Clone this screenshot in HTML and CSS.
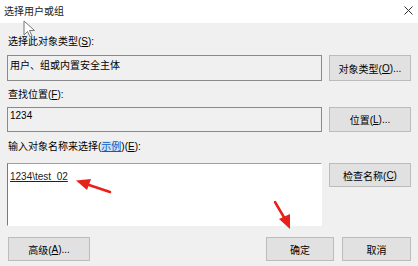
FILE: index.html
```html
<html>
    <head>
        <meta charset="utf-8">
        <title>选择用户或组</title>
        <link rel="stylesheet" href="styles.css">
    </head>
    <body>
        <div class="titlebar">
            <span class="title">选择用户或组</span>
            <svg class="close" width="9" height="9" viewBox="0 0 9 9">
                <path d="M0.5 0.5 L8.5 8.5 M8.5 0.5 L0.5 8.5" stroke="#333" stroke-width="1" fill="none"/>
            </svg>
        </div>
        <div class="content">
            <div class="label">选择此对象类型(<u>S</u>):</div>
            <div class="row">
                <div class="field readonly">用户、组或内置安全主体</div>
                <div class="btn">对象类型(<u>O</u>)...</div>
            </div>

            <div class="label second">查找位置(<u>F</u>):</div>
            <div class="row">
                <div class="field readonly">1234</div>
                <div class="btn">位置(<u>L</u>)...</div>
            </div>

            <div class="label third">输入对象名称来选择(<span class="link">示例</span>)(<u>E</u>):</div>
            <div class="row tall">
                <div class="field names"><u>1234\test_02</u></div>
                <div class="btn small">检查名称(<u>C</u>)</div>
            </div>

            <div class="footer">
                <div class="btn advanced">高级(<u>A</u>)...</div>
                <div class="actions">
                    <div class="btn ok">确定</div>
                    <div class="btn cancel">取消</div>
                </div>
            </div>
        </div>

        <!-- mouse pointer and the red marks drawn over the dialog -->
        <svg class="cursor" width="13" height="19" viewBox="0 0 13 19">
            <path d="M1 1 L1 15 L4.5 11.5 L7 17 L9 16 L6.5 10.5 L11.5 10.5 Z" fill="#fff" stroke="#777" stroke-width="1" stroke-linejoin="round"/>
        </svg>
        <svg class="marks" width="418" height="266" viewBox="0 0 418 266">
            <line x1="110" y1="192" x2="86" y2="184" stroke="#e8201a" stroke-width="2.5" stroke-linecap="round"/>
            <path d="M76 180.5 L91 179 L87 190 Z" fill="#e8201a"/>
            <line x1="275" y1="202" x2="285" y2="219" stroke="#e8201a" stroke-width="2.5" stroke-linecap="round"/>
            <path d="M290 229 L279 219 L290 214 Z" fill="#e8201a"/>
        </svg>
    </body>
</html>
```

FILE: styles.css
```css
body{
    margin: 0;
    width: 418px;
    height: 266px;
    background-color: #f0f0f0;
    font-family: "Liberation Sans", "Noto Sans CJK SC", sans-serif;
    font-size: 10px;
    color: #000;
    overflow: hidden;
    position: relative;
}
.titlebar{
    height: 23px;
    background-color: #fff;
    display: flex;
    align-items: center;
    justify-content: space-between;
    padding: 0 5px 2px 4px;
    box-sizing: border-box;
}
.title{
    font-size: 10px;
    color: #222;
}
.close{
    display: block;
}
.content{
    padding: 0 7px;
}
.label{
    height: 16px;
    line-height: 16px;
    margin-top: 11px;
    padding-left: 1px;
}
.label.second{
    margin-top: 6px;
}
.label.third{
    margin-top: 7px;
}
.link{
    color: #0a5bc4;
    text-decoration: underline;
    background-color: #cde2f6;
}
.row{
    display: flex;
    gap: 7px;
    align-items: flex-start;
    margin-top: 5px;
}
.label.second + .row{
    margin-top: 4px;
}
.row.tall{
    margin-top: 8px;
}
.field{
    width: 315px;
    height: 26px;
    box-sizing: border-box;
    border: 1px solid #8a8a8a;
    padding: 2px 2px;
    line-height: 16px;
    background-color: #f0f0f0;
}
.label.second + .row .field{
    height: 25px;
    padding-top: 0;
}
.field.names{
    height: 63px;
    padding-top: 5px;
    background-color: #fff;
    border-color: #a0a0a0 #fff #fff #7a7a7a;
    color: #222;
}
.btn{
    width: 82px;
    height: 26px;
    box-sizing: border-box;
    border: 1px solid #bcbcbc;
    background-color: #e1e1e1;
    display: flex;
    align-items: center;
    justify-content: center;
}
.label.second + .row .btn{
    height: 25px;
}
.btn.small{
    height: 24px;
}
.footer{
    display: flex;
    justify-content: space-between;
    margin-top: 11px;
}
.footer .btn{
    height: 24px;
}
.btn.advanced{
    margin-left: 1px;
}
.actions{
    display: flex;
    gap: 8px;
}
.btn.ok{
    width: 68px;
}
.btn.cancel{
    width: 69px;
}
.cursor{
    position: absolute;
    left: 23px;
    top: 20px;
}
.marks{
    position: absolute;
    left: 0;
    top: 0;
}
```
